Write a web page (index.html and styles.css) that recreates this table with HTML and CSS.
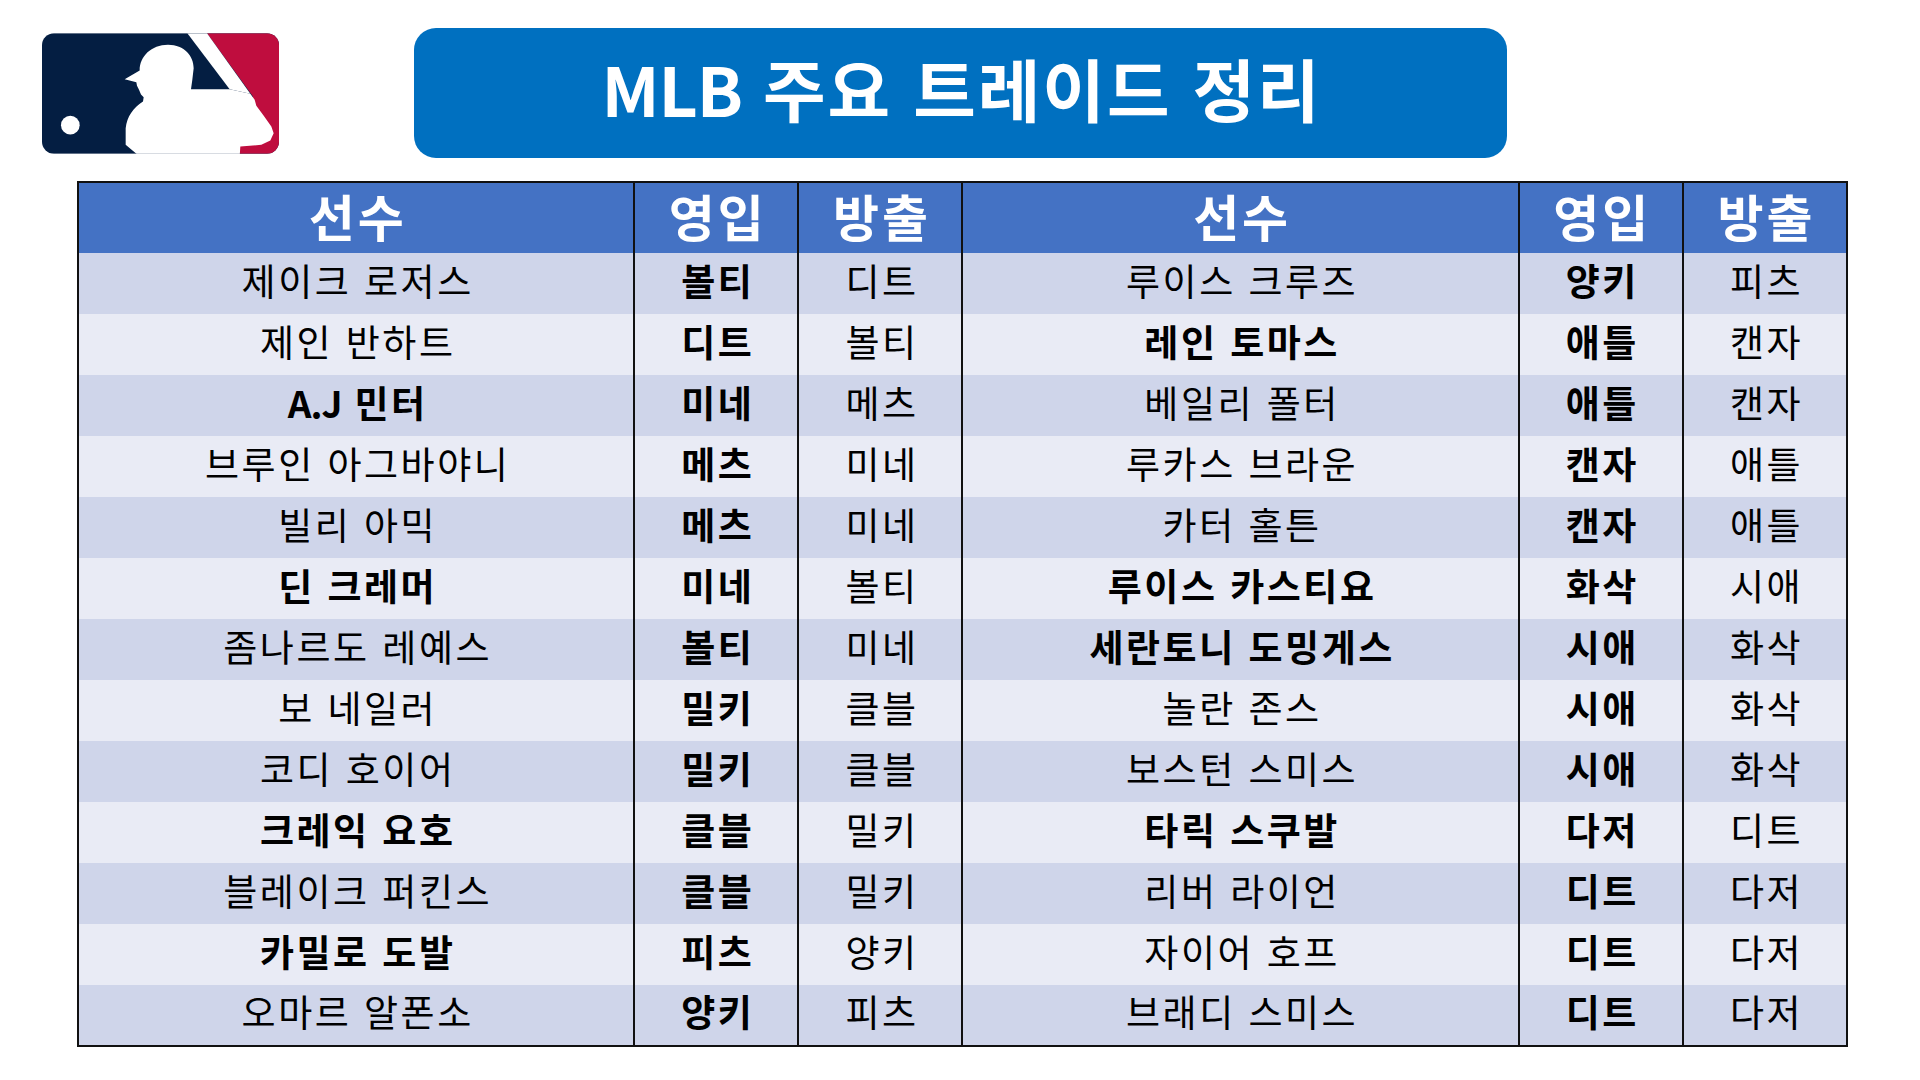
FILE: index.html
```html
<!DOCTYPE html>
<html lang="ko">
<head>
<meta charset="utf-8">
<title>MLB 주요 트레이드 정리</title>
<link rel="stylesheet" href="styles.css">
</head>
<body>
<div class="page">
  <header class="top">
    <svg class="logo" viewBox="127 100 711 362" width="237" height="121" aria-label="MLB">
      <defs>
        <clipPath id="lc"><rect x="127" y="100" width="711" height="362" rx="36"/></clipPath>
      </defs>
      <g clip-path="url(#lc)">
        <rect x="127" y="100" width="711" height="362" fill="#041E42"/>
        <polygon points="622,100 838,100 838,462 720,462 720,380 760,290" fill="#BF0D3E"/>
        <polygon points="563,100 622,100 752,282 690,268" fill="#fff"/>
        <path fill="#fff" d="M375,238 L420,212 C420,170 455,135 505,135 C555,135 582,170 582,205 L578,240 L574,268 L690,268 L752,282 L765,300 L770,318 L790,345 L815,380 L822,400 L812,422 L785,435 L722,440 L720,470 L420,470 L378,435 L378,385 C382,350 400,325 430,305 L432,292 L424,284 L418,270 L412,258 L410,247 Z"/>
        <circle cx="212" cy="376" r="28" fill="#fff"/>
      </g>
    </svg>
    <div class="banner"><h1 class="title"><span class="lat">MLB</span> 주요 트레이드 정리</h1></div>
  </header>

  <table class="trades">
    <colgroup>
      <col class="c-name"><col class="c-team"><col class="c-team">
      <col class="c-name"><col class="c-team"><col class="c-team">
    </colgroup>
    <thead>
      <tr><th>선수</th><th>영입</th><th>방출</th><th>선수</th><th>영입</th><th>방출</th></tr>
    </thead>
    <tbody>
      <tr><td>제이크 로저스</td><td class="b">볼티</td><td>디트</td><td>루이스 크루즈</td><td class="b">양키</td><td>피츠</td></tr>
      <tr><td>제인 반하트</td><td class="b">디트</td><td>볼티</td><td class="b">레인 토마스</td><td class="b">애틀</td><td>캔자</td></tr>
      <tr><td class="b"><span class="lat">A.J</span> 민터</td><td class="b">미네</td><td>메츠</td><td>베일리 폴터</td><td class="b">애틀</td><td>캔자</td></tr>
      <tr><td>브루인 아그바야니</td><td class="b">메츠</td><td>미네</td><td>루카스 브라운</td><td class="b">캔자</td><td>애틀</td></tr>
      <tr><td>빌리 아믹</td><td class="b">메츠</td><td>미네</td><td>카터 홀튼</td><td class="b">캔자</td><td>애틀</td></tr>
      <tr><td class="b">딘 크레머</td><td class="b">미네</td><td>볼티</td><td class="b">루이스 카스티요</td><td class="b">화삭</td><td>시애</td></tr>
      <tr><td>좀나르도 레예스</td><td class="b">볼티</td><td>미네</td><td class="b">세란토니 도밍게스</td><td class="b">시애</td><td>화삭</td></tr>
      <tr><td>보 네일러</td><td class="b">밀키</td><td>클블</td><td>놀란 존스</td><td class="b">시애</td><td>화삭</td></tr>
      <tr><td>코디 호이어</td><td class="b">밀키</td><td>클블</td><td>보스턴 스미스</td><td class="b">시애</td><td>화삭</td></tr>
      <tr><td class="b">크레익 요호</td><td class="b">클블</td><td>밀키</td><td class="b">타릭 스쿠발</td><td class="b">다저</td><td>디트</td></tr>
      <tr><td>블레이크 퍼킨스</td><td class="b">클블</td><td>밀키</td><td>리버 라이언</td><td class="b">디트</td><td>다저</td></tr>
      <tr><td class="b">카밀로 도발</td><td class="b">피츠</td><td>양키</td><td>자이어 호프</td><td class="b">디트</td><td>다저</td></tr>
      <tr><td>오마르 알폰소</td><td class="b">양키</td><td>피츠</td><td>브래디 스미스</td><td class="b">디트</td><td>다저</td></tr>
    </tbody>
  </table>
</div>
</body>
</html>
```

FILE: styles.css
```css
html, body {
  margin: 0;
  padding: 0;
  background: #ffffff;
}

body {
  font-family: "Noto Sans CJK KR", "Noto Sans", sans-serif;
  color: #000;
}

.page {
  width: 1920px;
  height: 1080px;
  overflow: hidden;
}

.top {
  display: flex;
  align-items: flex-start;
}

.logo {
  display: block;
  margin-left: 42px;
  margin-top: 33px;
  flex: none;
}

.banner {
  margin-left: 135px;
  margin-top: 28px;
  width: 1093px;
  height: 130px;
  box-sizing: border-box;
  padding-bottom: 10px;
  background: #0070C0;
  border-radius: 22px;
  display: flex;
  align-items: center;
  justify-content: center;
}

.title {
  margin: 0;
  padding-left: 2px;
  color: #ffffff;
  font-size: 68px;
  font-weight: 700;
  line-height: 1;
  letter-spacing: 2px;
}

.lat {
  letter-spacing: -1px;
}

.trades {
  margin-left: 77px;
  margin-top: 23px;
  width: 1771px;
  border-collapse: collapse;
  table-layout: fixed;
  border: 2px solid #111;
}

.c-name { width: 556px; }
.c-team { width: 164px; }

.trades th,
.trades td {
  padding: 0 0 7px 3px;
  text-align: center;
  vertical-align: middle;
  border-left: 2px solid #111;
  border-right: 2px solid #111;
  line-height: 1;
  white-space: nowrap;
}

.trades thead tr { height: 71px; }

.trades th {
  background: #4472C4;
  color: #ffffff;
  font-size: 50px;
  font-weight: 700;
  letter-spacing: 3px;
}

.trades tbody tr { height: 61px; }

.trades td {
  font-size: 37px;
  font-weight: 400;
  letter-spacing: 2.5px;
}

.trades tbody tr:nth-child(odd) td { background: #CFD5EA; }
.trades tbody tr:nth-child(even) td { background: #E9EBF5; }

.trades td.b { font-weight: 700; }
```
